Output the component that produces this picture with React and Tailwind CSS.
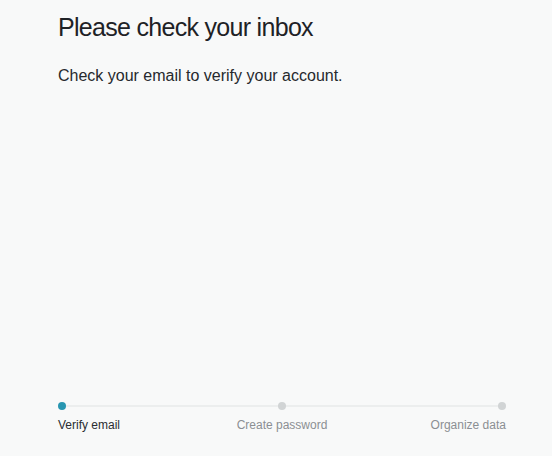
export default function App() {
  const steps = [
    { label: 'Verify email', active: true, align: 'justify-self-start' },
    { label: 'Create password', active: false, align: 'justify-self-center' },
    { label: 'Organize data', active: false, align: 'justify-self-end' },
  ];

  return (
    <div className="h-[456px] w-[552px] bg-[#f8f9f9] font-['Liberation_Sans',Arial,sans-serif] flex flex-col pl-[58px]">
      <div className="w-[448px] flex-1 flex flex-col">
        <h1 className="pt-[12px] text-[25px] leading-[30px] text-[#1e2226] tracking-[-0.7px]">
          Please check your inbox
        </h1>
        <p className="mt-[23px] text-[16px] leading-[22px] text-[#26292d]">
          Check your email to verify your account.
        </p>

        <div className="mt-auto mb-[23px]">
          <div className="relative h-[8px]">
            <div className="absolute left-[4px] right-[4px] top-[3px] h-[2px] bg-[#eceeee]" />
            <div className="relative flex justify-between">
              {steps.map((s) => (
                <span
                  key={s.label}
                  className={
                    'block h-[8px] w-[8px] rounded-full ' +
                    (s.active ? 'bg-[#2896b1]' : 'bg-[#d1d4d5]')
                  }
                />
              ))}
            </div>
          </div>
          <div className="mt-[7px] grid grid-cols-3 text-[12px] leading-[16px]">
            {steps.map((s) => (
              <span
                key={s.label}
                className={s.align + ' ' + (s.active ? 'text-[#2a2d31]' : 'text-[#8b8f93]')}
              >
                {s.label}
              </span>
            ))}
          </div>
        </div>
      </div>
    </div>
  );
}
